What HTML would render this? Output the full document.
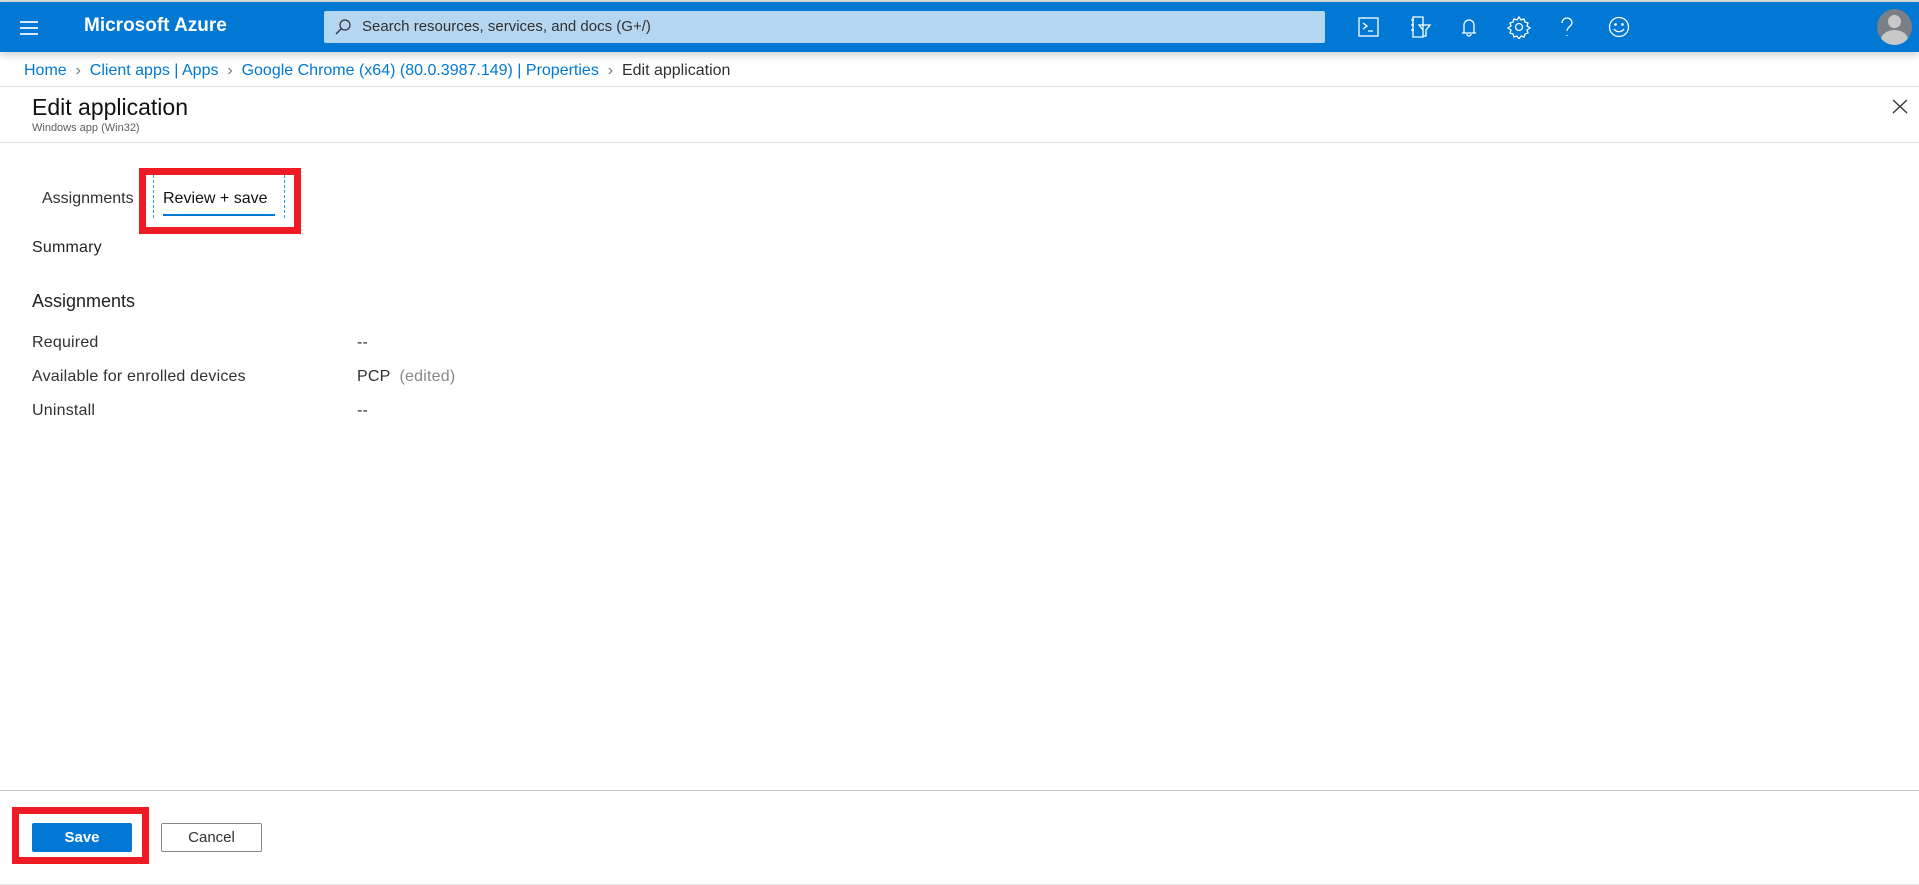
<!DOCTYPE html>
<html><head><meta charset="utf-8"><style>
*{margin:0;padding:0;box-sizing:border-box}
body{width:1919px;height:885px;position:relative;overflow:hidden;background:#fff;font-family:"Liberation Sans",sans-serif;color:#323130}
.a{position:absolute;white-space:nowrap}
.r{font-size:16px;letter-spacing:.2px}
</style></head><body>
<div class="a" style="left:0;top:0;width:1919px;height:2px;background:#ddd"></div>
<div class="a" style="left:0;top:2px;width:1919px;height:50px;background:#0078d4;box-shadow:0 3px 8px rgba(0,0,0,.2)"></div>
<div class="a" style="left:20px;top:21px;width:18px;height:2px;background:#fff;opacity:.85;box-shadow:0 6px 0 #fff,0 12px 0 #fff"></div>
<div class="a" style="left:84px;top:15px;font-size:19px;font-weight:bold;color:#fff">Microsoft Azure</div>
<div class="a" style="left:324px;top:11px;width:1001px;height:32px;background:#b4d6f1;border-radius:2px"></div>
<svg class="a" style="left:334px;top:18px" width="18" height="18" viewBox="0 0 18 18"><circle cx="11" cy="7" r="5" fill="none" stroke="#333" stroke-width="1.2"/><path d="M7.5 10.5 2 16" stroke="#333" stroke-width="1.3"/></svg>
<div class="a" style="left:362px;top:18px;font-size:15px;color:#323130">Search resources, services, and docs (G+/)</div>
<svg class="a" style="left:1355px;top:15px" width="290" height="24" viewBox="0 0 290 24" fill="none" stroke="#fff" stroke-width="1.3">
<rect x="4" y="3" width="19" height="18"/><path d="M8 8l4 3-4 3M13 16h5"/>
<path d="M58 2h10v20H58zM56 5h3M56 10h3M56 15h3M64 10h11l-4 5v6h-3v-6z"/>
<path d="M109 18V10a5 5 0 0 1 10 0v8h2H107zM112 19a2 2 0 0 0 4 0"/>
<circle cx="164" cy="12" r="3.5"/><path d="M164 2l2 3 3-1 1 3 3 1-1 3 3 2-3 2 1 3-3 1-1 3-3-1-2 3-2-3-3 1-1-3-3-1 1-3-3-2 3-2-1-3 3-1 1-3 3 1z"/>
<path d="M207 8a5 5 0 0 1 10 0c0 3-5 4-5 8M212 20v1"/>
<circle cx="264" cy="12" r="9.5"/><circle cx="260.5" cy="9.5" r=".7" fill="#fff"/><circle cx="267.5" cy="9.5" r=".7" fill="#fff"/><path d="M259 14a6 6 0 0 0 10 0"/>
</svg>
<div class="a" style="left:1877px;top:9px;width:35px;height:36px;border-radius:50%;background:#7a7f86;overflow:hidden">
<div class="a" style="left:11px;top:6px;width:13px;height:13px;border-radius:50%;background:#c8c8c8"></div>
<div class="a" style="left:4px;top:21px;width:27px;height:20px;border-radius:50% 50% 0 0;background:#c8c8c8"></div></div>
<div class="a" style="left:24px;top:62px;font-size:16px;color:#0078d4">Home <span style="color:#777">&nbsp;›&nbsp;</span> Client apps | Apps <span style="color:#777">&nbsp;›&nbsp;</span> Google Chrome (x64) (80.0.3987.149) | Properties <span style="color:#777">&nbsp;›&nbsp;</span> <span style="color:#323130">Edit application</span></div>
<div class="a" style="left:0;top:86px;width:1919px;height:1px;background:#ddd"></div>
<div class="a" style="left:32px;top:94px;font-size:23px;color:#111">Edit application</div>
<div class="a" style="left:32px;top:122px;font-size:11px;color:#605e5c">Windows app (Win32)</div>
<div class="a" style="left:0;top:142px;width:1919px;height:1px;background:#ddd"></div>
<svg class="a" style="left:1892px;top:99px" width="16" height="15"><path d="M1 1l14 13M15 1 1 14" stroke="#333" stroke-width="1.3"/></svg>
<div class="a" style="left:42px;top:190px;font-size:16px;color:#323130">Assignments</div>
<div class="a" style="left:163px;top:190px;font-size:16px;color:#111">Review + save</div>
<div class="a" style="left:163px;top:214px;width:112px;height:2px;background:#0078d4"></div>
<div class="a" style="left:153px;top:175px;height:43px;border-left:1px dashed #1aa3e8"></div>
<div class="a" style="left:284px;top:175px;height:43px;border-left:1px dashed #1aa3e8"></div>
<div class="a" style="left:139px;top:168px;width:162px;height:66px;border:7px solid #ed1c24"></div>
<div class="a r" style="left:32px;top:239px;color:#222">Summary</div>
<div class="a" style="left:32px;top:291px;font-size:18px;color:#222">Assignments</div>
<div class="a r" style="left:32px;top:334px">Required</div>
<div class="a r" style="left:357px;top:334px">--</div>
<div class="a r" style="left:32px;top:368px">Available for enrolled devices</div>
<div class="a r" style="left:357px;top:368px">PCP <span style="color:#8a8886">&nbsp;(edited)</span></div>
<div class="a r" style="left:32px;top:402px">Uninstall</div>
<div class="a r" style="left:357px;top:402px">--</div>
<div class="a" style="left:0;top:790px;width:1919px;height:1px;background:#c8c8c8"></div>
<div class="a" style="left:12px;top:807px;width:137px;height:57px;border:7px solid #ed1c24"></div>
<div class="a" style="left:32px;top:823px;width:100px;height:29px;background:#0078d4;border-radius:2px;color:#fff;font-weight:bold;font-size:15px;text-align:center;line-height:29px">Save</div>
<div class="a" style="left:161px;top:823px;width:101px;height:29px;border:1px solid #8a8886;border-radius:2px;font-size:15px;text-align:center;line-height:27px">Cancel</div>
<div class="a" style="left:0;top:884px;width:1919px;height:1px;background:#e5e5e5"></div>
</body></html>
